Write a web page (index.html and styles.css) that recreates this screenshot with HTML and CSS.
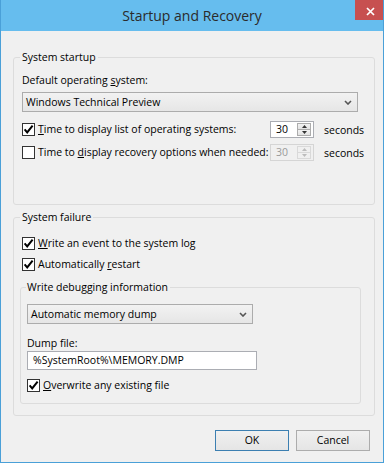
FILE: index.html
```html
<!DOCTYPE html>
<html lang="en">
<head>
<meta charset="utf-8">
<title>Startup and Recovery</title>
<link rel="stylesheet" href="styles.css">
</head>
<body>
<div class="window">
  <div class="titlebar">
    <div class="title">Startup and Recovery</div>
    <div class="close">
      <svg width="9" height="9" viewBox="0 0 9 9"><path d="M1 1L8 8M8 1L1 8" stroke="#fff" stroke-width="1.7" fill="none"/></svg>
    </div>
  </div>
  <div class="client">
    <fieldset class="group g1">
      <legend>System startup</legend>
      <div class="label first">Default operating <u>s</u>ystem:</div>
      <div class="combo wide">
        <span class="combo-text">Windows Technical Preview</span>
        <svg class="chev" width="8" height="5" viewBox="0 0 8 5"><path d="M1 1L4 4L7 1" stroke="#555" stroke-width="1.6" fill="none"/></svg>
      </div>
      <div class="timerow r1">
        <div class="check">
          <span class="cb"><svg width="11" height="11" viewBox="0 0 11 11"><path d="M1.6 5.4L4.2 8.4L9.6 1.6" stroke="#000" stroke-width="2" fill="none"/></svg></span>
          <span class="cb-label"><u>T</u>ime to display list of operating systems:</span>
        </div>
        <div class="spin">
          <span class="spin-val">30</span>
          <div class="arrows">
            <span class="arr"><svg width="5" height="3" viewBox="0 0 5 3"><path d="M0 3L2.5 0L5 3Z" fill="#333"/></svg></span>
            <span class="arr"><svg width="5" height="3" viewBox="0 0 5 3"><path d="M0 0L2.5 3L5 0Z" fill="#333"/></svg></span>
          </div>
        </div>
        <span class="unit">seconds</span>
      </div>
      <div class="timerow r2">
        <div class="check">
          <span class="cb"></span>
          <span class="cb-label">Time to <u>d</u>isplay recovery options when needed:</span>
        </div>
        <div class="spin disabled">
          <span class="spin-val">30</span>
          <div class="arrows">
            <span class="arr"><svg width="5" height="3" viewBox="0 0 5 3"><path d="M0 3L2.5 0L5 3Z" fill="#bcbcbc"/></svg></span>
            <span class="arr"><svg width="5" height="3" viewBox="0 0 5 3"><path d="M0 0L2.5 3L5 0Z" fill="#bcbcbc"/></svg></span>
          </div>
        </div>
        <span class="unit">seconds</span>
      </div>
    </fieldset>

    <fieldset class="group g2">
      <legend>System failure</legend>
      <div class="check c1">
        <span class="cb"><svg width="11" height="11" viewBox="0 0 11 11"><path d="M1.6 5.4L4.2 8.4L9.6 1.6" stroke="#000" stroke-width="2" fill="none"/></svg></span>
        <span class="cb-label"><u>W</u>rite an event to the system log</span>
      </div>
      <div class="check c2">
        <span class="cb"><svg width="11" height="11" viewBox="0 0 11 11"><path d="M1.6 5.4L4.2 8.4L9.6 1.6" stroke="#000" stroke-width="2" fill="none"/></svg></span>
        <span class="cb-label">Automatically <u>r</u>estart</span>
      </div>
      <fieldset class="group inner">
        <legend>Write debugging information</legend>
        <div class="combo dump">
          <span class="combo-text">Automatic memory dump</span>
          <svg class="chev" width="8" height="5" viewBox="0 0 8 5"><path d="M1 1L4 4L7 1" stroke="#555" stroke-width="1.6" fill="none"/></svg>
        </div>
        <div class="label dumplabel">Dump file:</div>
        <div class="textbox">%SystemRoot%\MEMORY.DMP</div>
        <div class="check c3">
          <span class="cb"><svg width="11" height="11" viewBox="0 0 11 11"><path d="M1.6 5.4L4.2 8.4L9.6 1.6" stroke="#000" stroke-width="2" fill="none"/></svg></span>
          <span class="cb-label"><u>O</u>verwrite any existing file</span>
        </div>
      </fieldset>
    </fieldset>

    <div class="buttons">
      <button class="btn default">OK</button>
      <button class="btn">Cancel</button>
    </div>
  </div>
</div>
</body>
</html>
```

FILE: styles.css
```css
* { box-sizing: border-box; }
html, body { margin: 0; padding: 0; background: #ffffff; }
body {
  font-family: "Open Sans", "Liberation Sans", sans-serif;
  font-size: 10.5px;
  color: #000;
}
.window {
  width: 384px;
  height: 463px;
  display: flex;
  flex-direction: column;
  background: #66bdee;
  border: 1px solid #4aa0d8;
  border-top: 0;
}
.titlebar {
  height: 31px;
  flex: none;
  display: grid;
  grid-template-columns: 1fr auto 1fr;
  align-items: start;
}
.title {
  grid-column: 2;
  font-size: 14px;
  line-height: 31px;
  color: #2b2b2b;
  white-space: nowrap;
}
.close {
  grid-column: 3;
  justify-self: end;
  width: 28px;
  height: 20px;
  background: #c75050;
  display: flex;
  align-items: center;
  justify-content: center;
  padding-left: 3px;
  padding-top: 2px;
}
.close svg { display: block; }
.client {
  flex: 1;
  background: #f0f0f0;
  padding: 19px 8px 0 12px;
  display: flex;
  flex-direction: column;
}
.group {
  margin: 0;
  border: 1px solid #dcdcdc;
  border-radius: 3px;
  padding: 0 8px;
  min-width: 0;
  min-inline-size: 0;
}
.group > legend {
  padding: 0 2px;
  margin-left: -2px;
  height: 15px;
  line-height: 15px;
  white-space: nowrap;
}
.g1 { padding-bottom: 43px; }
.g2 { margin-top: 5px; padding-bottom: 11px; }
.inner {
  margin: 8px 5px 0 -2px;
  padding: 0 6px 10px 6px;
}
.inner > legend { margin-left: -1px; padding: 0 2px 0 1px; }
.label { line-height: 15px; height: 15px; white-space: nowrap; }
.label.first { margin-top: 8px; }
u { text-underline-offset: 1px; text-decoration-thickness: 1px; }

.combo {
  height: 20px;
  border: 1px solid #acacac;
  background: linear-gradient(#f2f2f2, #e6e6e6);
  display: flex;
  align-items: center;
  padding: 0 5px 0 3px;
}
.combo-text { flex: 1; line-height: 18px; white-space: nowrap; }
.chev { display: block; flex: none; }
.combo.wide { margin-top: 4px; width: 336px; }
.combo.dump { margin-top: 9px; width: 226px; }

.timerow {
  display: grid;
  grid-template-columns: 248px 44px auto;
  align-items: center;
  height: 17px;
}
.timerow.r1 { margin-top: 9px; }
.timerow.r2 { margin-top: 6px; }
.unit { margin-left: 10px; white-space: nowrap; }

.check {
  display: flex;
  align-items: center;
  height: 15px;
  white-space: nowrap;
}
.cb {
  width: 13px;
  height: 13px;
  flex: none;
  border: 1px solid #333;
  background: #fff;
  display: flex;
  align-items: center;
  justify-content: center;
}
.cb svg { display: block; }
.cb-label { margin-left: 3px; line-height: 15px; }
.check.c1 { margin-top: 11px; }
.check.c2 { margin-top: 6px; }
.check.c3 { margin-top: 8px; }

.spin {
  width: 44px;
  height: 17px;
  border: 1px solid #abadb3;
  background: #fff;
  display: flex;
  align-items: stretch;
}
.spin-val { flex: 1; padding-left: 5px; line-height: 15px; }
.arrows {
  width: 14px;
  margin: 1px 2px 1px 0;
  display: flex;
  flex-direction: column;
}
.arr {
  flex: 1;
  border: 1px solid #acacac;
  background: linear-gradient(#f2f2f2, #e3e3e3);
  display: flex;
  align-items: center;
  justify-content: center;
}
.arr + .arr { border-top: 0; }
.arr svg { display: block; }
.spin.disabled { border-color: #d5d5d5; background: #f0f0f0; }
.spin.disabled .spin-val { color: #9a9a9a; }
.spin.disabled .arr { border-color: #d9d9d9; background: #f0f0f0; }

.dumplabel { margin-top: 12px; }
.textbox {
  width: 230px;
  height: 19px;
  border: 1px solid #abadb3;
  background: #fff;
  padding-left: 5px;
  line-height: 17px;
  white-space: nowrap;
}

.buttons {
  margin-top: 14px;
  display: flex;
  justify-content: flex-end;
  gap: 7px;
  padding-right: 5px;
}
.btn {
  width: 74px;
  height: 21px;
  margin: 0;
  padding: 0;
  border: 1px solid #acacac;
  background: linear-gradient(#f0f0f0, #e5e5e5);
  font-family: inherit;
  font-size: inherit;
  color: #000;
  line-height: 19px;
}
.btn.default { border-color: #3c7fb1; }
```
